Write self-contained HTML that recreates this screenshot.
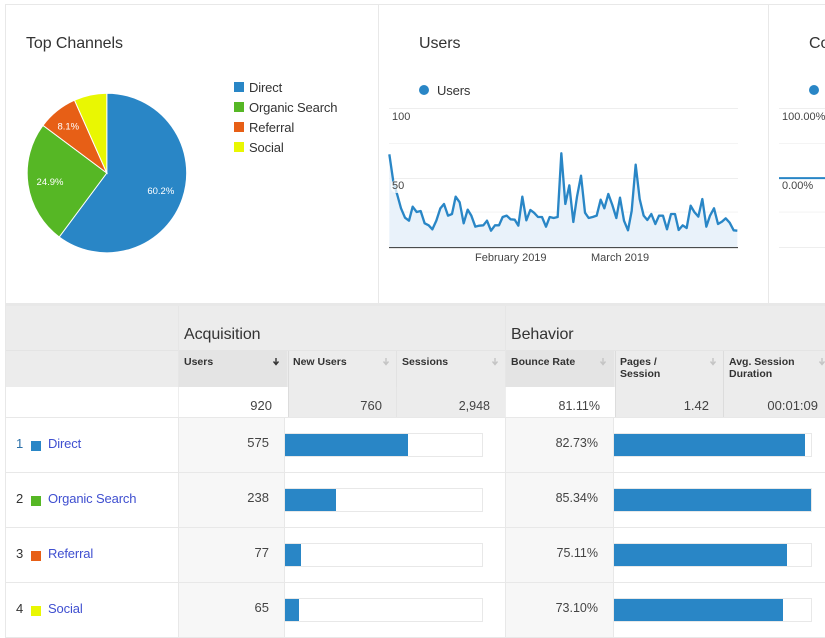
<!DOCTYPE html>
<html><head><meta charset="utf-8">
<style>
html,body{margin:0;padding:0;background:#fff}
#p{position:relative;width:825px;height:638px;overflow:hidden;background:#fff;font-family:"Liberation Sans",sans-serif;color:#333}
#p div,#p span,#p a{position:absolute;white-space:nowrap}
.b{background:#e8e8e8}
.t{font-size:16px;line-height:20px;color:#333;letter-spacing:-.08px}
.l{font-size:13px;line-height:16px;color:#333;letter-spacing:-.14px}
.s{font-size:11px;line-height:13px;color:#444}
.h{font-size:10.500px;line-height:12px;font-weight:bold;color:#333}
.n{font-size:13px;line-height:16px;color:#444;text-align:right}
.pc{font-size:12.500px}
.a{font-size:13px;line-height:16px;color:#3f4fd0;text-decoration:none;letter-spacing:-.14px}
</style></head><body>
<div id="p">
<!-- panel borders -->
<div class="b" style="left:5px;top:4px;width:820px;height:1px"></div>
<div class="b" style="left:5px;top:4px;width:1px;height:634px"></div>
<div class="b" style="left:378px;top:4px;width:1px;height:299px"></div>
<div class="b" style="left:768px;top:4px;width:1px;height:299px"></div>
<div class="b" style="left:5px;top:303px;width:820px;height:3px"></div>

<div class="t" style="left:26px;top:34px">Top Channels</div>
<svg style="position:absolute;left:0;top:0" width="825" height="303" viewBox="0 0 825 303">
<g stroke="#fff" stroke-width="1">
<path d="M106.8 173V93.2A79.8 79.8 0 1 1 59.2 237Z" fill="#2986c6"/>
<path d="M106.8 173L59.2 237A79.8 79.8 0 0 1 43 125.400Z" fill="#56b725"/>
<path d="M106.8 173L43 125.400A79.8 79.8 0 0 1 74.500 100.200Z" fill="#e75f16"/>
<path d="M106.8 173L74.500 100.200A79.8 79.8 0 0 1 106.800 93.200Z" fill="#e9f702"/>
</g>
<text x="160.800" y="194" font-family="Liberation Sans" font-size="9.500" fill="#fff" text-anchor="middle">60.2%</text>
<text x="50" y="185" font-family="Liberation Sans" font-size="9.500" fill="#fff" text-anchor="middle">24.9%</text>
<text x="68.300" y="129.500" font-family="Liberation Sans" font-size="9.500" fill="#fff" text-anchor="middle">8.1%</text>
</svg>
<div style="left:234px;top:82px;width:10px;height:10px;background:#2986c6"></div><div class="l" style="left:249px;top:80px">Direct</div>
<div style="left:234px;top:102px;width:10px;height:10px;background:#56b725"></div><div class="l" style="left:249px;top:100px">Organic Search</div>
<div style="left:234px;top:122px;width:10px;height:10px;background:#e75f16"></div><div class="l" style="left:249px;top:120px">Referral</div>
<div style="left:234px;top:142px;width:10px;height:10px;background:#e9f702"></div><div class="l" style="left:249px;top:140px">Social</div>

<!-- users chart -->
<div class="t" style="left:419px;top:34px">Users</div>
<div style="left:419px;top:85px;width:10px;height:10px;border-radius:50%;background:#2986c6"></div>
<div class="l" style="left:437px;top:83px">Users</div>
<svg style="position:absolute;left:380px;top:0" width="445" height="310" viewBox="0 0 1335 930">
<g fill="none">
<path d="M27 325.500H1074M1197 325.500H1335M27 535.500H1074" stroke="#eee" stroke-width="3"/>
<path d="M27 430.500H1074M27 636.500H1074M1197 430.500H1335M1197 636.500H1335" stroke="#f4f4f4" stroke-width="3"/>
<path d="M1197 742.500H1335" stroke="#eee" stroke-width="3"/>
<path d="M1197 534.500H1335" stroke="#2986c6" stroke-width="6"/>
</g>
<path fill="#e9f2fa" d="M28 742V463L40 545 52 585 63 625 75 653 87 662 98 620 110 636 122 633 134 670 146 676 157 688 169 662 181 625 192 612 204 647 216 642 227 590 239 607 251 670 263 629 274 647 286 680 298 677 310 676 321 662 333 692 345 676 357 676 368 651 380 647 392 658 404 659 415 677 427 590 439 661 451 630 462 638 474 651 486 651 498 680 509 651 521 654 533 651 544 460 556 612 568 556 580 666 591 590 603 527 615 638 626 654 638 651 650 647 662 599 673 625 685 582 697 615 709 654 720 593 732 662 744 691 755 633 767 494 779 597 791 647 802 660 814 642 826 672 837 647 849 647 861 688 873 642 885 642 896 690 908 676 920 684 932 617 943 636 955 650 967 597 979 680 990 647 1002 625 1014 672 1026 665 1037 655 1049 668 1061 691 1072 692V742Z"/>
<polyline fill="none" stroke="#2986c6" stroke-width="7" stroke-linejoin="round" points="28,463 40,545 52,585 63,625 75,653 87,662 98,620 110,636 122,633 134,670 146,676 157,688 169,662 181,625 192,612 204,647 216,642 227,590 239,607 251,670 263,629 274,647 286,680 298,677 310,676 321,662 333,692 345,676 357,676 368,651 380,647 392,658 404,659 415,677 427,590 439,661 451,630 462,638 474,651 486,651 498,680 509,651 521,654 533,651 544,460 556,612 568,556 580,666 591,590 603,527 615,638 626,654 638,651 650,647 662,599 673,625 685,582 697,615 709,654 720,593 732,662 744,691 755,633 767,494 779,597 791,647 802,660 814,642 826,672 837,647 849,647 861,688 873,642 885,642 896,690 908,676 920,684 932,617 943,636 955,650 967,597 979,680 990,647 1002,625 1014,672 1026,665 1037,655 1049,668 1061,691 1072,692"/>
<path d="M27 743H1074" stroke="#333" stroke-width="3"/>
</svg>
<div class="s" style="left:392px;top:111px">100</div>
<div style="left:391px;top:180px;width:14px;height:13px;background:#fff;opacity:.75;border-radius:5px"></div>
<div class="s" style="left:392px;top:180px">50</div>
<div class="s" style="left:475px;top:252px">February 2019</div>
<div class="s" style="left:591px;top:252px">March 2019</div>

<!-- third panel -->
<div class="t" style="left:809px;top:34px">Conversions</div>
<div style="left:809px;top:85px;width:10px;height:10px;border-radius:50%;background:#2986c6"></div>
<div class="s" style="left:782px;top:111px">100.00%</div>
<div class="s" style="left:782px;top:180px">0.00%</div>

<!-- table header -->
<div style="left:6px;top:306px;width:819px;height:81px;background:#ececec"></div>
<div style="left:179px;top:351px;width:108px;height:36px;background:#e4e4e4"></div>
<div style="left:506px;top:351px;width:108px;height:36px;background:#e4e4e4"></div>
<div style="left:6px;top:350px;width:819px;height:1px;background:#e4e4e4"></div>
<div style="left:178px;top:306px;width:1px;height:81px;background:#e6e6e6"></div>
<div style="left:505px;top:306px;width:1px;height:81px;background:#e6e6e6"></div>
<div style="left:288px;top:351px;width:1px;height:66px;background:#dcdcdc"></div>
<div style="left:396px;top:351px;width:1px;height:66px;background:#e2e2e2"></div>
<div style="left:615px;top:351px;width:1px;height:66px;background:#dcdcdc"></div>
<div style="left:723px;top:351px;width:1px;height:66px;background:#dcdcdc"></div>
<div style="left:289px;top:387px;width:216px;height:30px;background:#ececec"></div>
<div style="left:616px;top:387px;width:209px;height:30px;background:#ececec"></div>
<div style="left:396px;top:387px;width:1px;height:30px;background:#e4e4e4"></div>
<div style="left:288px;top:387px;width:1px;height:30px;background:#dcdcdc"></div>
<div style="left:615px;top:387px;width:1px;height:30px;background:#dcdcdc"></div>
<div style="left:723px;top:387px;width:1px;height:30px;background:#dcdcdc"></div>
<div style="left:178px;top:387px;width:1px;height:30px;background:#eee"></div>
<div style="left:505px;top:387px;width:1px;height:30px;background:#eee"></div>

<div class="t" style="left:184px;top:325px">Acquisition</div>
<div class="t" style="left:511px;top:325px">Behavior</div>
<div class="h" style="left:184px;top:356px">Users</div>
<div class="h" style="left:293px;top:356px">New Users</div>
<div class="h" style="left:402px;top:356px">Sessions</div>
<div class="h" style="left:511px;top:356px">Bounce Rate</div>
<div class="h" style="left:620px;top:356px">Pages /<br>Session</div>
<div class="h" style="left:729px;top:356px">Avg. Session<br>Duration</div>
<svg style="position:absolute;left:0;top:350px" width="825" height="24" viewBox="0 0 825 24">
<g fill="none" stroke="#c4c4c4" stroke-width="1.400">
<path d="M276 8V14M273.500 11.500L276 14.500 278.500 11.500" stroke="#333"/>
<path d="M386 8V14M383.500 11.500L386 14.500 388.500 11.500"/>
<path d="M495 8V14M492.500 11.500L495 14.500 497.500 11.500"/>
<path d="M603 8V14M600.500 11.500L603 14.500 605.500 11.500"/>
<path d="M713 8V14M710.500 11.500L713 14.500 715.500 11.500"/>
<path d="M822 8V14M819.500 11.500L822 14.500 824.500 11.500"/>
</g></svg>

<div class="n" style="right:553px;top:398px">920</div>
<div class="n" style="right:443px;top:398px">760</div>
<div class="n pc" style="right:335px;top:398px">2,948</div>
<div class="n pc" style="right:225px;top:398px">81.11%</div>
<div class="n" style="right:116px;top:398px">1.42</div>
<div class="n" style="right:7px;top:398px">00:01:09</div>

<!-- row lines & cols -->
<div class="b" style="left:6px;top:417px;width:819px;height:1px"></div>
<div class="b" style="left:6px;top:472px;width:819px;height:1px"></div>
<div class="b" style="left:6px;top:527px;width:819px;height:1px"></div>
<div class="b" style="left:6px;top:582px;width:819px;height:1px"></div>
<div class="b" style="left:6px;top:637px;width:819px;height:1px"></div>
<div style="left:179px;top:418px;width:105px;height:219px;background:repeating-linear-gradient(#f7f7f7 0 54px,#e8e8e8 54px 55px)"></div>
<div style="left:506px;top:418px;width:107px;height:219px;background:repeating-linear-gradient(#f7f7f7 0 54px,#e8e8e8 54px 55px)"></div>
<div class="b" style="left:178px;top:418px;width:1px;height:219px"></div>
<div class="b" style="left:284px;top:418px;width:1px;height:219px"></div>
<div class="b" style="left:505px;top:418px;width:1px;height:219px"></div>
<div class="b" style="left:613px;top:418px;width:1px;height:219px"></div>

<!-- row 1 -->
<div class="l" style="left:16px;top:436px;color:#2a6fa8">1</div>
<div style="left:31px;top:441px;width:10px;height:10px;background:#2986c6"></div>
<a class="a" style="left:48px;top:436px">Direct</a>
<div class="n" style="right:556px;top:435px">575</div>
<div class="n pc" style="right:227px;top:435px">82.73%</div>
<div style="left:285px;top:433px;width:197px;height:22px;border:1px solid #e8e8e8;border-left:0"></div>
<div style="left:285px;top:434px;width:123px;height:22px;background:#2986c6"></div>
<div style="left:614px;top:433px;width:197px;height:22px;border:1px solid #e8e8e8;border-left:0"></div>
<div style="left:614px;top:434px;width:191px;height:22px;background:#2986c6"></div>
<!-- row 2 -->
<div class="l" style="left:16px;top:491px">2</div>
<div style="left:31px;top:496px;width:10px;height:10px;background:#56b725"></div>
<a class="a" style="left:48px;top:491px">Organic Search</a>
<div class="n" style="right:556px;top:490px">238</div>
<div class="n pc" style="right:227px;top:490px">85.34%</div>
<div style="left:285px;top:488px;width:197px;height:22px;border:1px solid #e8e8e8;border-left:0"></div>
<div style="left:285px;top:489px;width:51px;height:22px;background:#2986c6"></div>
<div style="left:614px;top:488px;width:197px;height:22px;border:1px solid #e8e8e8;border-left:0"></div>
<div style="left:614px;top:489px;width:197px;height:22px;background:#2986c6"></div>
<!-- row 3 -->
<div class="l" style="left:16px;top:546px">3</div>
<div style="left:31px;top:551px;width:10px;height:10px;background:#e75f16"></div>
<a class="a" style="left:48px;top:546px">Referral</a>
<div class="n" style="right:556px;top:545px">77</div>
<div class="n pc" style="right:227px;top:545px">75.11%</div>
<div style="left:285px;top:543px;width:197px;height:22px;border:1px solid #e8e8e8;border-left:0"></div>
<div style="left:285px;top:544px;width:16px;height:22px;background:#2986c6"></div>
<div style="left:614px;top:543px;width:197px;height:22px;border:1px solid #e8e8e8;border-left:0"></div>
<div style="left:614px;top:544px;width:173px;height:22px;background:#2986c6"></div>
<!-- row 4 -->
<div class="l" style="left:16px;top:601px">4</div>
<div style="left:31px;top:606px;width:10px;height:10px;background:#e9f702"></div>
<a class="a" style="left:48px;top:601px">Social</a>
<div class="n" style="right:556px;top:600px">65</div>
<div class="n pc" style="right:227px;top:600px">73.10%</div>
<div style="left:285px;top:598px;width:197px;height:22px;border:1px solid #e8e8e8;border-left:0"></div>
<div style="left:285px;top:599px;width:14px;height:22px;background:#2986c6"></div>
<div style="left:614px;top:598px;width:197px;height:22px;border:1px solid #e8e8e8;border-left:0"></div>
<div style="left:614px;top:599px;width:169px;height:22px;background:#2986c6"></div>
</div>
</body></html>
